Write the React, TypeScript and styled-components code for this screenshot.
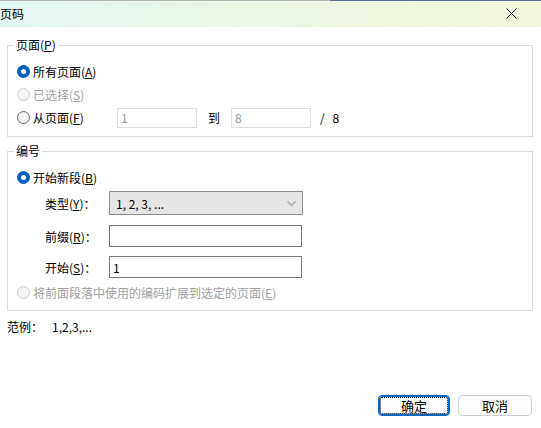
import React from 'react'
import styled, { createGlobalStyle } from 'styled-components'

const GlobalStyle = createGlobalStyle`
  html, body {
    margin: 0;
    padding: 0;
    background: #ffffff;
  }
  body {
    font-family: "Noto Sans CJK SC", "Noto Sans", "Liberation Sans", sans-serif;
    font-size: 12px;
    color: #000000;
  }
`

const Window = styled.div`
  display: flex;
  flex-direction: column;
  height: 428px;
  width: 541px;
  background: #ffffff;
  overflow: hidden;
`

// Title strip with the soft cyan to lime gradient and a 1px edge from the window behind
const TitleBar = styled.div`
  align-items: center;
  background:
    linear-gradient(to right, #b4b4b4 0 330px, #55729f 330px) top / 100% 1px no-repeat,
    linear-gradient(to right, #e3f6f3 0%, #ecf7e6 45%, #f2f6dc 100%);
  display: flex;
  flex-shrink: 0;
  height: 27px;
  justify-content: space-between;
  padding-right: 24px;
`

const Title = styled.span`
  font-size: 12px;
  line-height: 16px;
  margin-top: 1px;
`

const Body = styled.div`
  display: flex;
  flex: 1;
  flex-direction: column;
  padding: 0 8px 12px 7px;
`

const Group = styled.fieldset<{ top: number; bottom: number }>`
  border: 1px solid #dcdcdc;
  margin: ${({ top }) => top}px 0 0 0;
  min-width: 0;
  padding: 0 0 ${({ bottom }) => bottom}px 0;
`

const Legend = styled.legend`
  line-height: 16px;
  margin-left: 6px;
  padding: 0 2px;
`

const Rows = styled.div`
  display: flex;
  flex-direction: column;
  padding-top: 7px;
`

const RadioRow = styled.div<{ disabled?: boolean; top?: number }>`
  align-items: center;
  color: ${({ disabled }) => (disabled ? '#a0a0a0' : '#000000')};
  display: flex;
  height: 23px;
  margin-top: ${({ top }) => top ?? 0}px;
  padding-left: 9px;
`

const RadioDot = styled.span<{ checked?: boolean; disabled?: boolean }>`
  border-radius: 50%;
  box-sizing: border-box;
  flex-shrink: 0;
  height: 13px;
  margin-right: 3px;
  position: relative;
  width: 13px;
  background: ${({ checked, disabled }) =>
    checked ? '#005fb8' : disabled ? '#f5f5f5' : '#f3f3f3'};
  border: 1px solid
    ${({ checked, disabled }) => (checked ? '#005fb8' : disabled ? '#cdcdcd' : '#6a6a6a')};

  &::after {
    background: #ffffff;
    border-radius: 50%;
    content: '';
    display: ${({ checked }) => (checked ? 'block' : 'none')};
    height: 5px;
    left: 3px;
    position: absolute;
    top: 3px;
    width: 5px;
  }
`

const RangeLabel = styled.span`
  width: 84px;
`

const RangeInput = styled.div`
  align-items: center;
  border: 1px solid #dadee6;
  box-sizing: border-box;
  color: #9a9a9a;
  display: flex;
  height: 20px;
  padding-left: 3px;
  width: 80px;
`

const ToWord = styled.span`
  padding: 0 11px;
`

const PageCount = styled.span`
  margin-left: 9px;
  word-spacing: 5px;
`

const FieldRow = styled.div<{ top: number; h: number }>`
  align-items: center;
  display: flex;
  height: ${({ h }) => h}px;
  margin-top: ${({ top }) => top}px;
  padding-left: 37px;
`

const FieldLabel = styled.span`
  width: 64px;
`

const Select = styled.div`
  align-items: center;
  background: #e5e5e5;
  border: 1px solid #8c8c8c;
  box-sizing: border-box;
  display: flex;
  height: 24px;
  justify-content: space-between;
  padding: 0 6px 0 6px;
  width: 194px;
`

const TextBox = styled.div`
  align-items: center;
  border: 1px solid #7a7a7a;
  box-sizing: border-box;
  display: flex;
  height: 22px;
  padding-left: 3px;
  width: 193px;
`

const Example = styled.div`
  display: flex;
  line-height: 16px;
  margin-top: 8px;
`

const ExampleLabel = styled.span`
  width: 45px;
`

const Buttons = styled.div`
  display: flex;
  gap: 8px;
  justify-content: flex-end;
  margin-top: auto;
  padding-right: 1px;
`

const Button = styled.button<{ primary?: boolean; w: number }>`
  align-items: center;
  background: #fdfdfd;
  border: 1px solid ${({ primary }) => (primary ? '#0067c0' : '#d0d0d0')};
  border-radius: 4px;
  box-sizing: border-box;
  color: #000000;
  display: flex;
  font-family: inherit;
  font-size: 13px;
  height: 21px;
  justify-content: center;
  outline: ${({ primary }) => (primary ? '1px dotted #000000' : 'none')};
  outline-offset: -3px;
  padding: 0;
  width: ${({ w }) => w}px;
  box-shadow: ${({ primary }) => (primary ? 'inset 0 0 0 1px #0067c0' : 'none')};
`

const CloseIcon = () => (
  <svg width="11" height="11" viewBox="0 0 11 11">
    <path d="M0.5 0.5 L10.5 10.5 M10.5 0.5 L0.5 10.5" stroke="#1a1a1a" strokeWidth="1" />
  </svg>
)

const Chevron = () => (
  <svg width="9" height="5" viewBox="0 0 9 5">
    <path d="M0.5 0.5 L4.5 4.5 L8.5 0.5" stroke="#a6a6a6" strokeWidth="1.3" fill="none" />
  </svg>
)

export default function App() {
  return (
    <>
      <GlobalStyle />
      <Window>
        <TitleBar>
          <Title>页码</Title>
          <CloseIcon />
        </TitleBar>
        <Body>
          <Group top={10} bottom={7}>
            <Legend>
              页面(<u>P</u>)
            </Legend>
            <Rows>
              <RadioRow>
                <RadioDot checked />
                所有页面(<u>A</u>)
              </RadioRow>
              <RadioRow disabled>
                <RadioDot disabled />
                已选择(<u>S</u>)
              </RadioRow>
              <RadioRow>
                <RadioDot />
                <RangeLabel>
                  从页面(<u>F</u>)
                </RangeLabel>
                <RangeInput>1</RangeInput>
                <ToWord>到</ToWord>
                <RangeInput>8</RangeInput>
                <PageCount>/ 8</PageCount>
              </RadioRow>
            </Rows>
          </Group>

          <Group top={6} bottom={6}>
            <Legend>编号</Legend>
            <Rows>
              <RadioRow>
                <RadioDot checked />
                开始新段(<u>B</u>)
              </RadioRow>
              <FieldRow top={2} h={24}>
                <FieldLabel>
                  类型(<u>Y</u>)：
                </FieldLabel>
                <Select>
                  <span>1, 2, 3, ...</span>
                  <Chevron />
                </Select>
              </FieldRow>
              <FieldRow top={10} h={22}>
                <FieldLabel>
                  前缀(<u>R</u>)：
                </FieldLabel>
                <TextBox />
              </FieldRow>
              <FieldRow top={9} h={22}>
                <FieldLabel>
                  开始(<u>S</u>)：
                </FieldLabel>
                <TextBox>1</TextBox>
              </FieldRow>
              <RadioRow disabled top={3}>
                <RadioDot disabled />
                将前面段落中使用的编码扩展到选定的页面(<u>E</u>)
              </RadioRow>
            </Rows>
          </Group>

          <Example>
            <ExampleLabel>范例：</ExampleLabel>
            <span>1,2,3,...</span>
          </Example>

          <Buttons>
            <Button primary w={72}>
              确定
            </Button>
            <Button w={74}>取消</Button>
          </Buttons>
        </Body>
      </Window>
    </>
  )
}
